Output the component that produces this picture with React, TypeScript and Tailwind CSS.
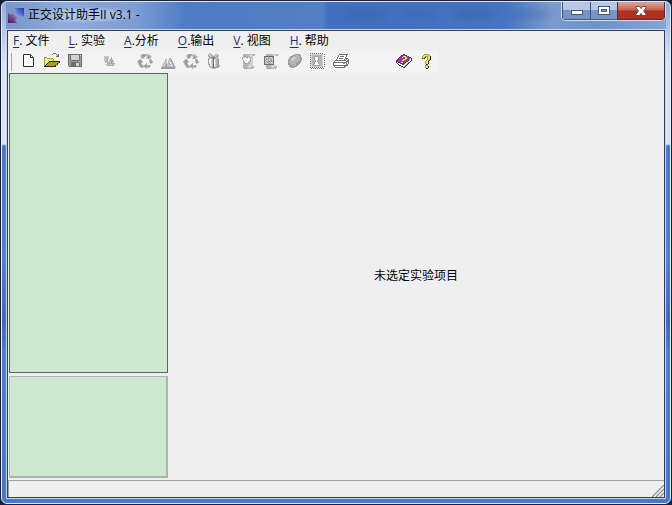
import React from 'react'

const palette: Record<string, string> = {
  k: '#2b2b2b',
  d: '#6e6e6e',
  g: '#9c9c9c',
  m: '#b6b6b6',
  l: '#d2d2d2',
  w: '#ffffff',
  y: '#eee84e',
  o: '#a5a02c',
  p: '#96409c',
  q: '#5d2b66',
  n: '#8d8a98',
}

const icons: Record<string, string[]> = {
  new: [
    '................',
    '..dkkkkkkd......',
    '..kwwwwwwkd.....',
    '..kwwwwwwkwd....',
    '..kwwwwwwkkkd...',
    '..kwwwwwwwwwk...',
    '..kwwwwwwwwwk...',
    '..kwwwwwwwwwk...',
    '..kwwwwwwwwwk...',
    '..kwwwwwwwwwk...',
    '..kwwwwwwwwwk...',
    '..kwwwwwwwwwk...',
    '..kwwwwwwwwwk...',
    '..dkkkkkkkkkd...',
  ],
  open: [
    '.........ddd....',
    '........d...d.d.',
    '.............dd.',
    '............ddd.',
    'ooo.............',
    'oywoooooo.......',
    'oywywywyyo......',
    'oyywywywyo......',
    'oywyykkkkkkkkkkk',
    'oyyykooooooooook',
    'oyykoooooooooko.',
    'oykooooooooook..',
    'okoooooooooko...',
    'kkkkkkkkkkkk....',
  ],
  save: [
    '................',
    '.dddddddddddddd.',
    '.dgdlllllllldld.',
    '.dgdlllllllldgd.',
    '.dgdlllllllldgd.',
    '.dgdlllllllldgd.',
    '.dgdlllllllldgd.',
    '.dggddddddddggd.',
    '.dggggggggggggd.',
    '.dggddddddddggd.',
    '.dggdddddllldgd.',
    '.dggdddddllldgd.',
    '.dggdddddllldgd.',
    '..ddddddddddddd.',
  ],
  copy: [
    '................',
    '................',
    '................',
    '..mlmlm.........',
    '..lmlml..m......',
    '..mlgmm..g......',
    '..lmlml.mgm.....',
    '..mlmg.mmgm.....',
    '..lmgm.mlgmg....',
    '...mlmmglgm.....',
    '.....gmmmgmgm...',
    '...lmlmlmlmlm...',
    '.....mgmgmgm....',
  ],
  recycle: [
    '................',
    '....lmggmlml....',
    '...lmggggmmmml..',
    '...lmggg.lmgmml.',
    '....mgml..mggm..',
    '....lml..mmgml..',
    '..mm........lml.',
    '.mggm.......mgm.',
    'mggggm......mggm',
    'lmggml......lggm',
    '.mggl....m...ml.',
    '.lggml..mm......',
    '..mggmlmggmmgl..',
    '..lmggmgggmggl..',
    '...lmmllmmmml...',
    '.........m......',
  ],
  mountain: [
    '................',
    '................',
    '................',
    '................',
    '................',
    '......l..mm.....',
    '.....ml..mgm....',
    '.....mm.lmlg....',
    '....lml.mlmgm...',
    '....mlm.mlwmg...',
    '...lmlmlmmwlgm..',
    '...mlmgmlmmlmg..',
    '..lmlmglmlmwlgm.',
    '..mlmggmmlmllmg.',
    '.mggggggggggggmm',
    '.mggggggggggggg.',
  ],
  gift: [
    '...mm...........',
    '..mllm...mmm....',
    '..gllgm.mllgm...',
    '..mglmgmglmgm...',
    '...mgggdggmm....',
    '..mglmgdgmlgm...',
    '..glwlmdllmmg...',
    '..gwwlmdwlmgg...',
    '..gwwlmdwlmmg...',
    '..gwwlmdwlmgg...',
    '..glwlmdwlmmg...',
    '..mgwlmdwlmgg...',
    '...gwlmdwlmmgm..',
    '...mglmdllmggm..',
    '....mmgdgggmm...',
    '......mmmm......',
  ],
  hand: [
    '................',
    '..mmmmmmlllmgm..',
    '..mmmmmmllllmm..',
    '..mggmmmllll....',
    '.mlmwgmlgmll....',
    '.gwlwwmwwgll....',
    '.mwwwwwwwmll....',
    '..gwwlwwwgll....',
    '..mwwwwwgmll....',
    '..mgwwwgmlll....',
    '..mmggmmmlll....',
    '..mmmmmmllll....',
    '..mmmmmlllll....',
    '..mmmmmlllllm...',
    '..gmmmmlllmgm...',
    '...gggmmmmmm....',
  ],
  grid: [
    '................',
    '..mmmmmmmlllmm..',
    '..mmmmmmmlllmm..',
    'dddddddddd......',
    'dmllmmllmd......',
    'dlglgmglld......',
    'dlgmmlmgld......',
    'dgllglggld......',
    'dlgmggmgmd......',
    'dmlgmmglld......',
    'dlmlgglmld......',
    'dddddddddd......',
    '..mmmmmlllll....',
    '..mmmmmlllllm...',
    '..gmmmmmllmgm...',
    '...gggmmmmmm....',
  ],
  disc: [
    '................',
    '.......mmgggg...',
    '.....mggmmmmgg..',
    '...mggmmmmmmmg..',
    '..mggmlllmmmmgm.',
    '..gmmlllmmmmmgg.',
    '.mgmlllmmmmmmgg.',
    '.ggmmllmmmmmmgm.',
    '.gmmmmmmmmmggg..',
    '.gmmmmmmmmgggg..',
    '.ggmmmmmmgggg...',
    '.ggmmmgmmggg....',
    '..ggggmmmgg.....',
    '..mggggggm......',
    '...mggmm........',
  ],
  stamp: [
    'd.d.d.d.d.d.d.',
    '.llllllllllll.d',
    'dlmmmmmmmmmml.',
    '.lmmmgggmmmml.d',
    'dlmmgwwwgmmml.',
    '.lmmgwwwgmmml.d',
    'dlmmgwwwgmmml.',
    '.lmmmgwgmmmml.d',
    'dlmmmgwgmmmml.',
    '.lmmgwwwgmmml.d',
    'dlmmgwwwgmmml.',
    '.lmgwwwwwgmml.d',
    'dlmgggggggmml.',
    '.llllllllllll.d',
    'd.d.d.d.d.d.d.',
    '.d.d.d.d.d.d.d',
  ],
  print: [
    '................',
    '......ddddddddd.',
    '.....dwwwwwwwd..',
    '.....dwddddwwd..',
    '....dwwwwwwwd...',
    '....dwddddwwddd.',
    '...dwwwwwwwd.d.d',
    '..ddddddddddd.dd',
    '.dwwwwwwwwwwwddd',
    'dddddddddddddd.d',
    'dwwwwwwwwwggwd.d',
    'dwwwwwwwwwwwwdd.',
    'ddddddddddddddd.',
    '.dwwwwwwwwwdd...',
    '..dddddddddd....',
  ],
  book: [
    '................',
    '.......qq.......',
    '.....qqppqq.....',
    '....qppyyyppq...',
    '...qppyppyyppqq.',
    '..qppppppyyppqlk',
    '.qpppppyyyppqlwk',
    'qpppppyyppppqlwk',
    'qqppppppppqqlwk.',
    'qwqqpyyppqlwnk..',
    '.qwwqqpqqlwnk...',
    '..kwwwqqlwnk....',
    '...kkwwwwnk.....',
    '.....kkwnk......',
    '.......kk.......',
  ],
  help: [
    '................',
    '.....ooooo......',
    '....oyyyyyo.....',
    '...oyyoooyyk....',
    '...oyok.oyyk....',
    '...kok..oyyk....',
    '........oyok....',
    '.......oyok.....',
    '......oyyk......',
    '......oyyk......',
    '......oyyk......',
    '.......kk.......',
    '......ooo.......',
    '......oyyk......',
    '......oyyk......',
    '.......kk.......',
  ],
}

function PixelIcon({ name }: { name: string }) {
  return (
    <svg className="block size-4" viewBox="0 0 16 16" shapeRendering="crispEdges" aria-hidden="true">
      {icons[name].map((row, y) =>
        row.split('').map((c, x) =>
          c === '.' ? null : <rect key={x + '-' + y} x={x} y={y} width="1" height="1" fill={palette[c]} />
        )
      )}
    </svg>
  )
}

const menus = [
  { letter: 'F', rest: '. 文件' },
  { letter: 'L', rest: '. 实验' },
  { letter: 'A', rest: '.分析' },
  { letter: 'O', rest: '.输出' },
  { letter: 'V', rest: '. 视图' },
  { letter: 'H', rest: '. 帮助' },
]

function TitleBar() {
  return (
    <header className="relative flex h-[27px] shrink-0 items-start justify-between overflow-hidden bg-[linear-gradient(90deg,#7795cb_0px,#8eacdb_60px,#7c9dd3_130px,#4e7cc4_180px,#527fc5_316px,#416fbf_322px,#4675c4_500px,#7d9ccf_545px,#6e91c9_590px,#87a5d5_100%)]">

      <div className="absolute top-2 left-[340px] flex gap-4 blur-xs" aria-hidden="true">
        <span className="h-2 w-10 bg-[#33619f]/50"></span>
        <span className="h-2 w-9 bg-[#33619f]/40"></span>
        <span className="h-2 w-10 bg-[#33619f]/60"></span>
        <span className="h-2 w-10 bg-[#33619f]/40"></span>
      </div>

      <div className="relative flex h-[25px] items-center gap-1 pl-0.5">
        <svg className="size-4" viewBox="0 0 16 16" aria-hidden="true">
          <defs>
            <linearGradient id="upper" x1="0" y1="1" x2="1" y2="0">
              <stop offset="0" stopColor="#d8e4f8" />
              <stop offset="0.4" stopColor="#6f8ee0" />
              <stop offset="1" stopColor="#1a2fa6" />
            </linearGradient>
            <linearGradient id="lower" x1="0" y1="1" x2="1" y2="0">
              <stop offset="0" stopColor="#451653" />
              <stop offset="0.5" stopColor="#7d5594" />
              <stop offset="1" stopColor="#d8d4ec" />
            </linearGradient>
          </defs>
          <path d="M6 1H16V10L13 8L9 12L5 7L9 3Z" fill="url(#upper)" />
          <path d="M0 6L3 8L6 5L11 10L7 13L9 16H0Z" fill="url(#lower)" />
        </svg>
        <h1 className="bg-[radial-gradient(ellipse,#d4e1f399_0%,#d4e1f366_45%,#d4e1f300_72%)] text-xs text-black">正交设计助手II v3.1 -</h1>
      </div>

      <div className="relative flex h-[19px] overflow-hidden rounded-b-[5px] border border-t-0 border-[#d3def0]">
        <button aria-label="最小化" className="flex w-7 items-center justify-center border border-t-0 border-r-0 border-[#3d5380] bg-linear-to-b from-[#b6c8e5] from-45% to-[#7794c4] to-50%">
          <svg className="mt-1 h-[5px] w-3" viewBox="0 0 12 5" shapeRendering="crispEdges">
            <rect x="0" y="0" width="12" height="5" fill="#4c5570" />
            <rect x="1" y="1" width="10" height="3" fill="#fff" />
          </svg>
        </button>
        <button aria-label="最大化" className="flex w-[27px] items-center justify-center border border-t-0 border-r-0 border-[#3d5380] bg-linear-to-b from-[#b6c8e5] from-45% to-[#7794c4] to-50%">
          <svg className="h-[9px] w-3" viewBox="0 0 12 9" shapeRendering="crispEdges">
            <rect x="0" y="0" width="12" height="9" fill="#4c5570" />
            <rect x="1" y="1" width="10" height="7" fill="#fff" />
            <rect x="3" y="3" width="6" height="3" fill="#4c5570" />
            <rect x="4" y="4" width="4" height="1" fill="#8ea9d6" />
          </svg>
        </button>
        <button aria-label="关闭" className="flex w-12 items-center justify-center border border-t-0 border-[#5b2833] bg-linear-to-b from-[#dc9a8e] from-10% via-[#c9604e] via-45% to-[#b03020] to-55%">
          <svg className="h-[10px] w-3" viewBox="0 0 12 10">
            <path d="M1 .5H4.5L6 2.5L7.5 .5H11V2L8.5 5L11 8V9.5H7.5L6 7.5L4.5 9.5H1V8L3.5 5L1 2Z" fill="#fff" stroke="#5c4a58" />
          </svg>
        </button>
      </div>

    </header>
  )
}

function MenuBar() {
  return (
    <nav className="flex h-5 shrink-0 items-center gap-[19px] pl-[5px]">
      {menus.map((menu) => (
        <button key={menu.letter} className="text-xs whitespace-pre">
          <span className="text-[#1c2f66] underline underline-offset-2">{menu.letter}</span>
          {menu.rest}
        </button>
      ))}
    </nav>
  )
}

function ToolButton({ icon, label }: { icon: string; label: string }) {
  return (
    <button aria-label={label} className="h-4 w-[23px] pl-1">
      <PixelIcon name={icon} />
    </button>
  )
}

function Toolbar() {
  return (
    <div role="toolbar" className="flex h-[22px] w-fit shrink-0 items-start bg-[#f3f3f3] pt-0.5 pl-[3px]">

      <span className="mr-[5px] h-[18px] w-px bg-[#a9a9a9]"></span>

      <div className="flex">
        <ToolButton icon="new" label="新建" />
        <ToolButton icon="open" label="打开" />
        <ToolButton icon="save" label="保存" />
      </div>

      <div className="ml-3 flex">
        <ToolButton icon="copy" label="复制" />
      </div>

      <div className="ml-3 flex">
        <ToolButton icon="recycle" label="新建实验" />
        <ToolButton icon="mountain" label="直观分析" />
        <ToolButton icon="recycle" label="交互作用" />
        <ToolButton icon="gift" label="方差分析" />
      </div>

      <div className="ml-3 flex">
        <ToolButton icon="hand" label="因素" />
        <ToolButton icon="grid" label="表格" />
        <ToolButton icon="disc" label="图表" />
        <ToolButton icon="stamp" label="预览" />
        <ToolButton icon="print" label="打印" />
      </div>

      <div className="ml-10 flex">
        <ToolButton icon="book" label="帮助主题" />
        <ToolButton icon="help" label="关于" />
      </div>

    </div>
  )
}

function App() {
  return (
    <div className="h-screen bg-[#122040] font-['Open_Sans','Noto_Sans_CJK_SC',sans-serif] text-black">
      <div className="flex h-full flex-col border border-[#16213f]">
        <div className="flex min-h-0 flex-1 flex-col rounded-md border border-[#dfe9f7] bg-[linear-gradient(180deg,#8eacdb_0px,#dbe4f4_60px,#dbe4f4_142px,#4b7bc3_144px,#5482c8_260px,#3f6bb3_320px,#5080c6_350px,#4a79c1_100%)] px-1 pb-1">

          <TitleBar />

          <div className="flex min-h-0 flex-1 flex-col border border-[#c5d6ee]">
            <div className="flex min-h-0 flex-1 flex-col border border-[#2c3d5d] bg-[#efefef]">

              <MenuBar />
              <Toolbar />

              <main className="flex min-h-0 flex-1">

                <aside className="flex w-40 shrink-0 flex-col gap-[3px] pl-px">
                  <div className="flex-3 border border-[#626262] bg-[#cce8cf]"></div>
                  <div className="flex-1 border border-r-2 border-b-2 border-[#b2b2b2] bg-[#cce8cf]"></div>
                </aside>

                <section className="flex flex-1 items-center justify-center">
                  <p className="text-xs">未选定实验项目</p>
                </section>

              </main>

              <footer className="mt-0.5 flex h-[17px] shrink-0 items-end justify-end border-t border-l border-[#a0a0a0]">
                <svg className="size-3" viewBox="0 0 12 12" aria-hidden="true">
                  <path d="M0 12L12 0M4 12L12 4M8 12L12 8" stroke="#8b8b8b" strokeWidth="1.2" />
                </svg>
              </footer>

            </div>
          </div>

        </div>
      </div>
    </div>
  )
}

export default App
